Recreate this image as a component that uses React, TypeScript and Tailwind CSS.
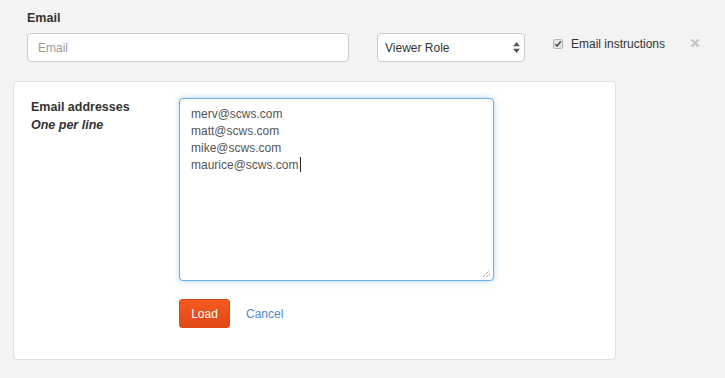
import { useState } from "react";

const EMAILS = ["merv@scws.com", "matt@scws.com", "mike@scws.com", "maurice@scws.com"];

export default function App() {
  const [role, setRole] = useState("viewer");

  return (
    <div className="min-h-[378px] w-[725px] bg-[#f3f3f3] pt-[9px] text-[12px] leading-[18px] text-[#333] [font-family:'Liberation_Sans',Arial,sans-serif]">
      {/* Top row */}
      <div className="flex items-start pl-[27px]">
        <div className="flex w-[322px] flex-col">
          <label className="mb-[6px] text-[12.5px] font-bold">Email</label>
          <input
            type="text"
            placeholder="Email"
            className="h-[29px] w-full rounded-[4px] border border-[#ccc] bg-white px-[10px] text-[12px] text-[#555] placeholder:text-[#999] outline-none"
          />
        </div>

        <div className="relative ml-[28px] mt-[24px] h-[29px] w-[148px]">
          <select
            value={role}
            onChange={(e) => setRole(e.target.value)}
            className="h-full w-full appearance-none rounded-[4px] border border-[#ccc] bg-white pl-[7px] text-[12px] text-[#333] outline-none"
          >
            <option value="viewer">Viewer Role</option>
            <option value="editor">Editor Role</option>
          </select>
          <svg className="pointer-events-none absolute right-[5px] top-[9px]" width="7" height="11" viewBox="0 0 7 11">
            <path d="M3.5 0 L7 4.2 L0 4.2 Z" fill="#555" />
            <path d="M3.5 11 L7 6.8 L0 6.8 Z" fill="#555" />
          </svg>
        </div>

        <label className="ml-[28px] mt-[26px] flex w-[137px] items-center">
          <span className="flex h-[10px] w-[10px] items-center justify-center rounded-[2px] border border-[#b5b5b5] bg-[#e6e6e6]">
            <svg width="8" height="8" viewBox="0 0 8 8">
              <path d="M1.2 4.2 L3.1 6 L6.8 1.6" fill="none" stroke="#444" strokeWidth="1.5" />
            </svg>
          </span>
          <span className="ml-[8px] text-[#333]">Email instructions</span>
        </label>

        <button type="button" className="mt-[29px]" aria-label="Close">
          <svg width="10" height="10" viewBox="0 0 10 10">
            <path d="M1.5 1.5 L8.5 8.5 M8.5 1.5 L1.5 8.5" stroke="#c4c4c4" strokeWidth="2.4" />
          </svg>
        </button>
      </div>

      {/* Panel */}
      <div className="ml-[13px] mt-[19px] flex h-[279px] w-[603px] rounded-[4px] border border-[#e0e0e0] bg-white pl-[17px] pt-[16px]">
        <div className="w-[148px] text-[12.5px] font-bold">
          <div>Email addresses</div>
          <div className="italic">One per line</div>
        </div>

        <div className="flex flex-col">
          <div className="relative h-[183px] w-[315px] rounded-[4px] border border-[#66afe9] bg-white px-[11px] pt-[7px] text-[12px] leading-[17px] text-[#555] shadow-[0_0_6px_rgba(102,175,233,0.5)]">
            {EMAILS.map((email, i) => (
              <div key={email}>
                {email}
                {i === EMAILS.length - 1 && <span className="ml-[1px] inline-block h-[15px] w-px bg-[#222] align-[-3px]" />}
              </div>
            ))}
            <svg className="absolute bottom-[2px] right-[2px]" width="9" height="9" viewBox="0 0 9 9">
              <path d="M1 8 L8 1 M4.5 8 L8 4.5" stroke="#777" strokeWidth="1" strokeDasharray="1 1" />
            </svg>
          </div>

          <div className="mt-[18px] flex items-center">
            <button
              type="button"
              className="h-[29px] w-[51px] rounded-[3px] border border-[#d9471a] bg-gradient-to-b from-[#f65a1f] to-[#df4716] text-[12px] text-white"
            >
              Load
            </button>
            <a href="#" className="ml-[16px] text-[#4a8bcf]">
              Cancel
            </a>
          </div>
        </div>
      </div>
    </div>
  );
}
